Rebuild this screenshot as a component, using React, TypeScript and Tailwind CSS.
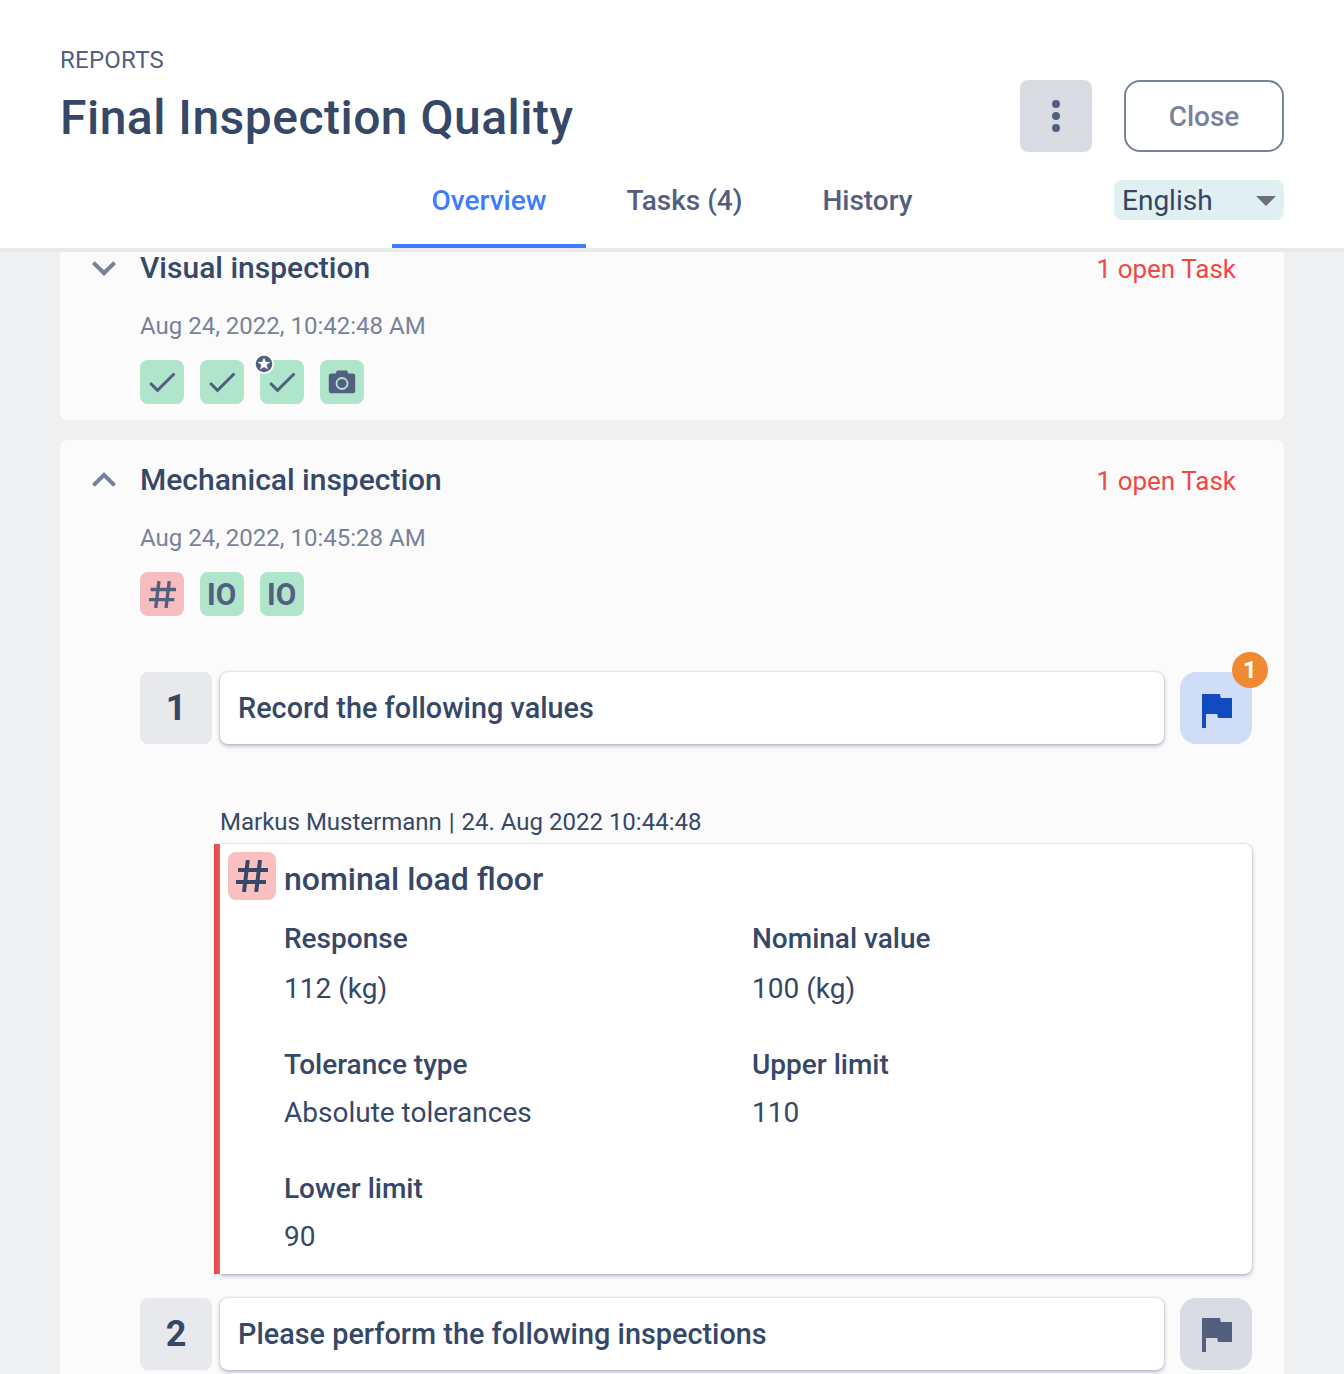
import type { ReactNode } from "react";

function Chevron({ up }: { up?: boolean }) {
  return (
    <svg viewBox="0 0 24 24" className="size-12 fill-[#77839c]">
      {up ? (
        <path d="M12 8l-6 6 1.41 1.41L12 10.83l4.59 4.58L18 14z" />
      ) : (
        <path d="M16.59 8.59L12 13.17 7.41 8.59 6 10l6 6 6-6z" />
      )}
    </svg>
  );
}

function Check() {
  return (
    <svg viewBox="0 0 24 24" className="size-9 fill-[#525f7f]">
      <path d="M9 16.17L4.83 12l-1.42 1.41L9 19 21 7l-1.41-1.41z" />
    </svg>
  );
}

function Camera() {
  return (
    <svg viewBox="0 0 28 24" className="h-6 w-7 fill-[#525f7f]">
      <path
        fillRule="evenodd"
        d="M9.5 0.5h9a1 1 0 0 1 1 1l.8 2H25a2.2 2.2 0 0 1 2.2 2v15.600a2.200 2.200 0 0 1-2.200 2.200H3a2.200 2.200 0 0 1-2.200-2.200V5.500a2.200 2.200 0 0 1 2.200-2h4.700l.8-2a1 1 0 0 1 1-1zM14 7.100a6.400 6.400 0 1 0 0 12.800 6.400 6.400 0 0 0 0-12.800z"
      />
      <circle cx="14" cy="13.5" r="4.6" />
    </svg>
  );
}

function Hash({ className }: { className: string }) {
  return (
    <svg viewBox="0 0 32 32" className={className} fill="none" strokeWidth="4" strokeLinecap="butt">
      <path d="M11.800 0L8 32M24 0L20.200 32M2 10H32M0 22H30" />
    </svg>
  );
}

function Flag({ className }: { className: string }) {
  return (
    <svg viewBox="0 0 24 24" className={className}>
      <path d="M14.400 6L14 4H5v17h2v-7h5.600l.4 2h7V6z" />
    </svg>
  );
}

function Tile({ bad, children }: { bad?: boolean; children: ReactNode }) {
  return (
    <div
      className={`relative flex size-11 items-center justify-center rounded-lg text-[32px] leading-none font-bold text-[#525f7f] ${bad ? "bg-[#f7bcbe]" : "bg-[#afe6cb]"}`}
    >
      {children}
    </div>
  );
}

function SectionHead({ title, date, up, children }: { title: string; date: string; up?: boolean; children: ReactNode }) {
  return (
    <div className="flex pr-12 pl-5">
      <div className="mt-4 w-[60px] shrink-0">
        <Chevron up={up} />
      </div>
      <div className="grow">
        <div className="flex h-20 items-center justify-between">
          <h2 className="pb-px text-[30px] leading-[30px] font-medium text-[#364868]">{title}</h2>
          <span className="pt-0.5 text-[26px] leading-[28px] text-[#f04848]">1 open Task</span>
        </div>
        <p className="h-9 text-2xl leading-9 text-[#77839c]">{date}</p>
        <div className="mt-4 flex gap-4">{children}</div>
      </div>
    </div>
  );
}

const cardShadow = "shadow-[0_2px_4px_rgba(52,69,99,0.35),0_0_2px_rgba(52,69,99,0.25)]";

function Step({ n, title, active }: { n: number; title: string; active?: boolean }) {
  return (
    <div className="flex pr-8 pl-20">
      <div className="flex size-[72px] items-center justify-center rounded-lg bg-[#e8e9ed] text-4xl font-bold text-[#364868]">
        {n}
      </div>
      <div className={`ml-2 flex h-[72px] w-[944px] items-center rounded-lg bg-white pt-0.5 pl-[18px] text-[28.8px] font-medium tracking-[0.02px] text-[#364868] ${cardShadow}`}>
        {title}
      </div>
      <div className={`relative ml-4 flex size-[72px] items-center justify-center rounded-2xl ${active ? "bg-[#d0ddf9]" : "bg-[#d9dce3]"}`}>
        <Flag className={active ? "size-12 translate-y-0.5 fill-[#124bc0]" : "size-12 fill-[#525f7f]"} />
        {active && (
          <span className="absolute -top-5 -right-4 flex size-9 items-center justify-center rounded-full bg-[#f08a32] text-2xl font-bold text-white">
            1
          </span>
        )}
      </div>
    </div>
  );
}

function Field({ label, value, tall }: { label: string; value: string; tall?: boolean }) {
  return (
    <div className="text-[28px] leading-[48px] text-[#364868]">
      <div className={`font-medium ${tall ? "h-[50px]" : "h-12"}`}>{label}</div>
      <div className="h-12">{value}</div>
    </div>
  );
}

export default function App() {
  return (
    <div className="h-[1374px] w-[1344px] overflow-hidden bg-[#eff0f2] font-['Roboto',sans-serif]">
      <header className="h-[252px] border-b-4 border-[#e8e9ed] bg-white px-[60px]">
        <div className="flex justify-between">
          <div className="pt-11">
            <div className="text-2xl leading-8 tracking-[0.25px] text-[#525f7f]">REPORTS</div>
            <h1 className="mt-2.5 text-[48px] leading-[64px] font-medium tracking-[0.48px] text-[#364868]">Final Inspection Quality</h1>
          </div>
          <div className="flex gap-8 pt-20">
            <button className="flex size-[72px] flex-col items-center justify-center gap-1 rounded-lg bg-[#d9dce3]">
              <i className="size-2 rounded-full bg-[#525f7f]" />
              <i className="size-2 rounded-full bg-[#525f7f]" />
              <i className="size-2 rounded-full bg-[#525f7f]" />
            </button>
            <button className="h-[72px] w-40 rounded-2xl border-2 border-[#77839c] pt-0.5 text-[28px] font-medium text-[#77839c]">
              Close
            </button>
          </div>
        </div>
        <div className="flex justify-end">
          <nav className="mr-[162px] flex h-24 text-[28px] leading-[98px] font-medium text-[#525f7f]">
            <a className="h-24 w-[194px] border-b-4 border-[#3d7cff] text-center text-[#3d7cff]">Overview</a>
            <a className="w-[197px] text-center">Tasks (4)</a>
            <a className="w-[169px] text-center">History</a>
          </nav>
          <div className="mt-7 flex h-10 w-[170px] items-center justify-between rounded-lg bg-[#e0eff2] px-2 text-[28px] text-[#344563]">
            <span className="pt-0.5">English</span>
            <svg viewBox="0 0 20 10" className="mt-px h-2.5 w-5 fill-[#6b7074]">
              <path d="M0 0h20L10 10z" />
            </svg>
          </div>
        </div>
      </header>

      <main className="px-[60px]">
        <section className="flow-root h-[168px] rounded-b-lg bg-[#fbfbfb]">
          <div className="-mt-6">
            <SectionHead title="Visual inspection" date="Aug 24, 2022, 10:42:48 AM">
              <Tile><Check /></Tile>
              <Tile><Check /></Tile>
              <Tile>
                <Check />
                <svg viewBox="0 0 20 20" className="absolute -top-1.5 -left-1.5 size-5">
                  <circle cx="10" cy="10" r="10" fill="#fff" />
                  <circle cx="10" cy="10" r="8.3" fill="#525f7f" />
                  <path fill="#fff" d="M10 3.600l1.700 4.200 4.500.3-3.500 2.900 1.200 4.500L10 13l-3.900 2.500 1.200-4.500L3.800 8.100l4.500-.3z" />
                </svg>
              </Tile>
              <Tile><Camera /></Tile>
            </SectionHead>
          </div>
        </section>

        <section className="mt-5 h-[960px] rounded-t-lg bg-[#fbfbfb]">
          <SectionHead up title="Mechanical inspection" date="Aug 24, 2022, 10:45:28 AM">
            <Tile bad><Hash className="size-[27px] stroke-[#525f7f]" /></Tile>
            <Tile><span className="scale-x-[0.93]">IO</span></Tile>
            <Tile><span className="scale-x-[0.93]">IO</span></Tile>
          </SectionHead>

          <div className="mt-14">
            <Step n={1} title="Record the following values" active />
          </div>

          <div className="mt-[60px] pr-8 pl-40">
            <p className="h-10 text-2xl leading-9 text-[#364868]">
              Markus Mustermann <span className="mx-px">|</span> 24. Aug 2022 10:44:48
            </p>
            <article className={`relative h-[430px] rounded-lg rounded-l-none bg-white ${cardShadow}`}>
              <div className="absolute top-0 -left-1.5 h-full w-1.5 bg-linear-to-r from-[#f04848] from-50% to-[#d8696d]" />
              <div className="flex gap-2 pt-2 pl-2">
                <div className="flex size-12 items-center justify-center rounded-lg bg-[#fac0c0]">
                  <Hash className="size-8 stroke-[#364868]" />
                </div>
                <h3 className="pt-[3px] text-[32px] leading-[48px] font-medium text-[#364868]">nominal load floor</h3>
              </div>
              <div className="mt-3 grid grid-cols-[468px_1fr] gap-y-7 pl-16">
                <Field tall label="Response" value="112 (kg)" />
                <Field tall label="Nominal value" value="100 (kg)" />
                <Field label="Tolerance type" value="Absolute tolerances" />
                <Field label="Upper limit" value="110" />
                <Field label="Lower limit" value="90" />
              </div>
            </article>
          </div>

          <div className="mt-6">
            <Step n={2} title="Please perform the following inspections" />
          </div>
        </section>
      </main>
    </div>
  );
}
